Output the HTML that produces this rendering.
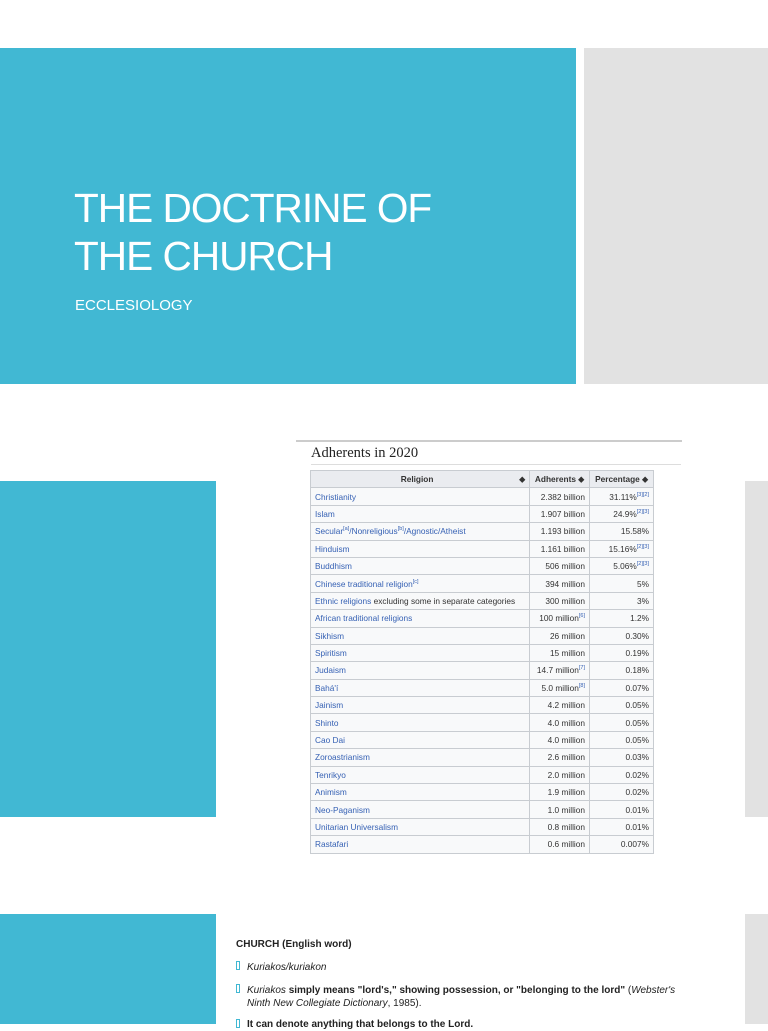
<!DOCTYPE html>
<html><head><meta charset="utf-8"><style>
*{margin:0;padding:0;box-sizing:border-box}
body{width:768px;height:1024px;background:#fff;position:relative;overflow:hidden;font-family:"Liberation Sans",sans-serif}
.b{position:absolute}
.cy{background:#41b8d3}
.gr{background:#e2e2e2}
h1{position:absolute;left:74px;top:184px;font-weight:normal;color:#fff;font-size:41px;line-height:48px;letter-spacing:-1px;transform:scaleX(0.99);transform-origin:0 0;white-space:nowrap}
.sub{position:absolute;left:75px;top:297px;color:#fff;font-size:15px}
.img{position:absolute;left:296px;top:440px;width:386px;height:418px;background:#fff;border-top:2px solid #ccc}
.cap{position:absolute;left:15px;top:3px;font-family:"Liberation Serif",serif;font-size:14.5px;color:#222;width:370px;border-bottom:1px solid #ddd;padding-bottom:2px}
table{position:absolute;left:14px;top:28px;border-collapse:collapse;font-size:8.3px;color:#333}
td,th{border:1px solid #c8ccd1;height:17.4px;padding:0 4px;white-space:nowrap}
th{background:#eaecf0;font-weight:bold;text-align:center}
td{background:#f8f9fa}
td:first-child{color:#3661b4;width:219px}
td:nth-child(2){text-align:right;width:60px}
td:nth-child(3){text-align:right;width:64px}
sup{font-size:5.5px;color:#3661b4}
.t{position:absolute;left:236px;font-size:10px;color:#222;line-height:13px}
.bl{position:absolute;left:236px;width:4px;height:9px;border:1px solid #41b8d3}
</style></head><body>
<div class="b cy" style="left:0;top:48px;width:576px;height:336px"></div>
<div class="b gr" style="left:584px;top:48px;width:184px;height:336px"></div>
<h1>THE DOCTRINE OF<br>THE CHURCH</h1>
<div class="sub">ECCLESIOLOGY</div>
<div class="b cy" style="left:0;top:481px;width:216px;height:336px"></div>
<div class="b gr" style="left:745px;top:481px;width:23px;height:336px"></div>
<div class="img"><div class="cap">Adherents in 2020</div>
<table>
<tr><th><span style="display:inline-block;width:190px;text-align:center">Religion</span><span style="float:right">⬥</span></th><th>Adherents ⬥</th><th>Percentage ⬥</th></tr>
<tr><td>Christianity</td><td>2.382 billion</td><td>31.11%<sup>[3][2]</sup></td></tr>
<tr><td>Islam</td><td>1.907 billion</td><td>24.9%<sup>[2][3]</sup></td></tr>
<tr><td>Secular<sup>[a]</sup>/Nonreligious<sup>[b]</sup>/Agnostic/Atheist</td><td>1.193 billion</td><td>15.58%</td></tr>
<tr><td>Hinduism</td><td>1.161 billion</td><td>15.16%<sup>[2][3]</sup></td></tr>
<tr><td>Buddhism</td><td>506 million</td><td>5.06%<sup>[2][3]</sup></td></tr>
<tr><td>Chinese traditional religion<sup>[c]</sup></td><td>394 million</td><td>5%</td></tr>
<tr><td>Ethnic religions <span style="color:#333">excluding some in separate categories</span></td><td>300 million</td><td>3%</td></tr>
<tr><td>African traditional religions</td><td>100 million<sup>[6]</sup></td><td>1.2%</td></tr>
<tr><td>Sikhism</td><td>26 million</td><td>0.30%</td></tr>
<tr><td>Spiritism</td><td>15 million</td><td>0.19%</td></tr>
<tr><td>Judaism</td><td>14.7 million<sup>[7]</sup></td><td>0.18%</td></tr>
<tr><td>Bahá'í</td><td>5.0 million<sup>[8]</sup></td><td>0.07%</td></tr>
<tr><td>Jainism</td><td>4.2 million</td><td>0.05%</td></tr>
<tr><td>Shinto</td><td>4.0 million</td><td>0.05%</td></tr>
<tr><td>Cao Dai</td><td>4.0 million</td><td>0.05%</td></tr>
<tr><td>Zoroastrianism</td><td>2.6 million</td><td>0.03%</td></tr>
<tr><td>Tenrikyo</td><td>2.0 million</td><td>0.02%</td></tr>
<tr><td>Animism</td><td>1.9 million</td><td>0.02%</td></tr>
<tr><td>Neo-Paganism</td><td>1.0 million</td><td>0.01%</td></tr>
<tr><td>Unitarian Universalism</td><td>0.8 million</td><td>0.01%</td></tr>
<tr><td>Rastafari</td><td>0.6 million</td><td>0.007%</td></tr>
</table></div>
<div class="b cy" style="left:0;top:914px;width:216px;height:110px"></div>
<div class="b gr" style="left:745px;top:914px;width:23px;height:110px"></div>
<div class="t" style="top:938px;font-weight:bold">CHURCH (English word)</div>
<div class="bl" style="top:961px"></div>
<div class="t" style="left:247px;top:961px;font-style:italic">Kuriakos/kuriakon</div>
<div class="bl" style="top:984px"></div>
<div class="t" style="left:247px;top:984px;width:450px"><i>Kuriakos</i> <b>simply means "lord's," showing possession, or "belonging to the lord"</b> (<i>Webster's Ninth New Collegiate Dictionary</i>, 1985).</div>
<div class="bl" style="top:1019px"></div>
<div class="t" style="left:247px;top:1018px;font-weight:bold">It can denote anything that belongs to the Lord.</div>
</body></html>
